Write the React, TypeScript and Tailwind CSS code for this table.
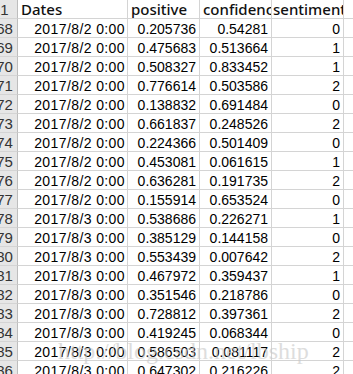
import React from "react";

const rows: [number, string, string, string, string][] = [
  [68, "2017/8/2 0:00", "0.205736", "0.54281", "0"],
  [69, "2017/8/2 0:00", "0.475683", "0.513664", "1"],
  [70, "2017/8/2 0:00", "0.508327", "0.833452", "1"],
  [71, "2017/8/2 0:00", "0.776614", "0.503586", "2"],
  [72, "2017/8/2 0:00", "0.138832", "0.691484", "0"],
  [73, "2017/8/2 0:00", "0.661837", "0.248526", "2"],
  [74, "2017/8/2 0:00", "0.224366", "0.501409", "0"],
  [75, "2017/8/2 0:00", "0.453081", "0.061615", "1"],
  [76, "2017/8/2 0:00", "0.636281", "0.191735", "2"],
  [77, "2017/8/2 0:00", "0.155914", "0.653524", "0"],
  [78, "2017/8/3 0:00", "0.538686", "0.226271", "1"],
  [79, "2017/8/3 0:00", "0.385129", "0.144158", "0"],
  [80, "2017/8/3 0:00", "0.553439", "0.007642", "2"],
  [81, "2017/8/3 0:00", "0.467972", "0.359437", "1"],
  [82, "2017/8/3 0:00", "0.351546", "0.218786", "0"],
  [83, "2017/8/3 0:00", "0.728812", "0.397361", "2"],
  [84, "2017/8/3 0:00", "0.419245", "0.068344", "0"],
  [85, "2017/8/3 0:00", "0.586503", "0.081117", "2"],
  [86, "2017/8/3 0:00", "0.647302", "0.216226", "2"],
];

const grid = "grid grid-cols-[18px_110px_72px_72px_72px_72px]";
const cell = "h-[19px] border-r border-b border-[#d4d4d4] overflow-hidden flex items-end";
const head = "pl-[3px] text-[15px] leading-[18px] font-medium whitespace-nowrap text-[#111]";

export default function App() {
  return (
    <div
      className="relative w-[353px] h-[374px] overflow-hidden bg-white text-black"
      style={{ fontFamily: '"Liberation Sans", Arial, sans-serif' }}
    >
      <div className={grid}>
        <div className={`${cell} bg-[#e6e6e6] border-r-[#bdbdbd]`}>
          <div className="w-[27px] -ml-[9px] shrink-0 text-center text-[15px] leading-[17px] text-[#333]">1</div>
        </div>
        <div className={`${cell} ${head}`} style={{ fontFamily: '"Noto Sans", sans-serif' }}>
          Dates
        </div>
        <div className={`${cell} ${head}`} style={{ fontFamily: '"Noto Sans", sans-serif' }}>
          positive
        </div>
        <div className={`${cell} ${head}`} style={{ fontFamily: '"Noto Sans", sans-serif' }}>
          confidence
        </div>
        <div className={`${cell} ${head} !pl-[1px]`} style={{ fontFamily: '"Noto Sans", sans-serif' }}>
          sentiment
        </div>
        <div className={cell}></div>
        {rows.map(([n, d, p, c, s]) => (
          <React.Fragment key={n}>
            <div className={`${cell} bg-[#e6e6e6] border-r-[#bdbdbd]`}>
              <div className="w-[27px] -ml-[9px] shrink-0 text-center text-[15px] leading-[16px] text-[#333]">{n}</div>
            </div>
            <div className={`${cell} justify-end pr-[2px] text-[14px] leading-[15px] tracking-[0.4px] whitespace-nowrap`}>{d}</div>
            <div className={`${cell} justify-end pr-[3px] text-[14px] leading-[15px]`}>{p}</div>
            <div className={`${cell} justify-end pr-[3px] text-[14px] leading-[15px]`}>{c}</div>
            <div className={`${cell} justify-end pr-[3px] text-[14px] leading-[15px]`}>{s}</div>
            <div className={cell}></div>
          </React.Fragment>
        ))}
      </div>
      <div
        className="absolute left-[58px] top-[338px] text-[24px] leading-[26px] text-[#c8c8c8] opacity-60 whitespace-nowrap pointer-events-none"
        style={{ fontFamily: '"Liberation Serif", serif' }}
      >
        http://blog.csdn.net/lbship
      </div>
    </div>
  );
}
